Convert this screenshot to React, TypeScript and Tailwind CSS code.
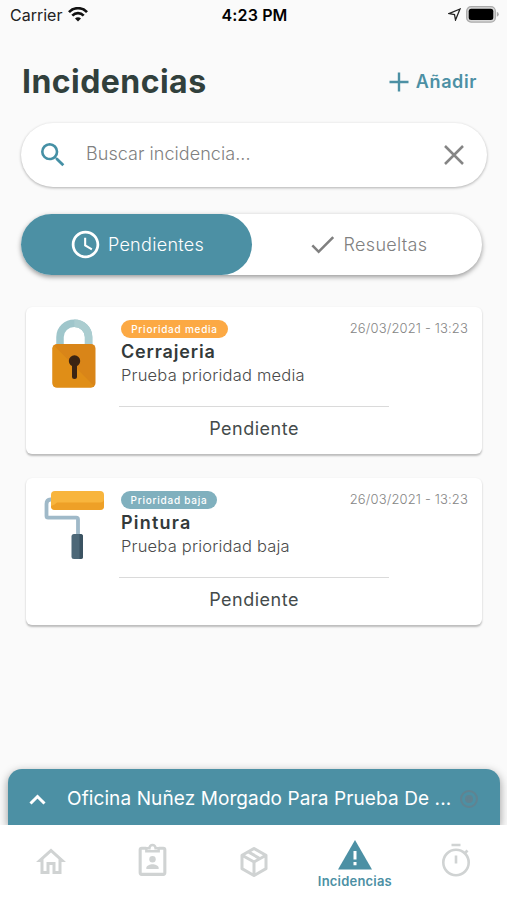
import { MdAccessTime, MdCheck, MdOutlineHome, MdSearch } from "react-icons/md";
import type { ReactNode } from "react";

function WifiIcon() {
    return (
        <svg width="20" height="15" viewBox="0 0 20 15" fill="none" stroke="#111" strokeWidth="2.7">
            <path d="M1 5.1C6-.1 14-.1 19 5.1" />
            <path d="M4.3 8.6c3.2-3.2 8.2-3.2 11.4 0" />
            <path d="M10 14.5l-3-3.1c1.7-1.5 4.3-1.5 6 0z" fill="#111" stroke="none" />
        </svg>
    )
}

function BatteryIcon() {
    return (
        <svg width="33" height="17" viewBox="0 0 33 17">
            <rect x=".7" y=".7" width="28.6" height="15.4" rx="4.4" fill="#d8d8d8" stroke="#aaa" strokeWidth="1.3" />
            <rect x="2.7" y="2.7" width="24.6" height="11.4" rx="2.5" fill="#000" />
            <path d="M30.8 5.8q2 .6 2 2.5t-2 2.5z" fill="#aaa" />
        </svg>
    )
}

function LockIcon() {
    return (
        <svg width="44" height="70" viewBox="0 0 44 70">
            <path d="M8 28V18a14.3 13.8 0 0 1 28.6 0V28" fill="none" stroke="#9fc6cb" strokeWidth="7.5" />
            <path d="M22.3 4.2A14.3 13.8 0 0 1 36.6 18V28" fill="none" stroke="#abcdd0" strokeWidth="7.5" />
            <rect x=".5" y="25" width="43" height="43.5" rx="4.5" fill="#d98518" />
            <path d="M2 26.5L42 67l-3 1.500H5Q.5 68.500.5 64V29.500Q.5 27.500 2 26.500z" fill="#e08e17" />
            <circle cx="22.5" cy="42" r="5.7" fill="#3b2413" />
            <path d="M22.5 42v15.500" stroke="#3b2413" strokeWidth="5" strokeLinecap="round" />
        </svg>
    )
}

function RollerIcon() {
    return (
        <svg width="62" height="70" viewBox="0 0 62 70">
            <path d="M9 9.5H7.500Q3.500 9.500 3.500 14V26q0 1.700 1.700 1.700h28q1.800 0 1.800 1.800V46" fill="none" stroke="#9fb9c8" strokeWidth="3.8" />
            <rect x="8" y="1" width="53" height="19" rx="4" fill="#f8b53d" />
            <path d="M8 16q4-1.500 6-3.500h43q4 0 4-4V16q0 4-4 4H12q-4 0-4-4z" fill="#eea027" />
            <rect x="28.5" y="44" width="11.5" height="25" rx="2.5" fill="#4d6878" />
            <path d="M36.500 44h1q2.500 0 2.500 2.500v20q0 2.500-2.500 2.500h-1z" fill="#3b5362" />
        </svg>
    )
}

function ClipboardIcon() {
    return (
        <svg width="37" height="37" viewBox="0 0 24 24" fill="none" stroke="currentColor" strokeWidth="2">
            <path d="M8 4H5a1 1 0 0 0-1 1v15a1 1 0 0 0 1 1h14a1 1 0 0 0 1-1V5a1 1 0 0 0-1-1h-3" />
            <path d="M8 4v2h8V4h-2a2 2 0 0 0-4 0z" strokeWidth="1.6" />
            <circle cx="12" cy="11.2" r="2.1" fill="currentColor" stroke="none" />
            <path d="M8 17.500v-.8c0-1.500 2.500-2.300 4-2.300s4 .8 4 2.300v.8z" fill="currentColor" stroke="none" />
        </svg>
    )
}

function PackageIcon() {
    return (
        <svg width="36" height="36" viewBox="0 0 24 24" fill="currentColor">
            <path d="M21 16.500c0 .38-.21.71-.53.88l-7.900 4.440a.99.99 0 0 1-1.140 0l-7.900-4.440A1 1 0 0 1 3 16.500v-9c0-.38.21-.71.53-.88l7.900-4.440a.99.99 0 0 1 1.140 0l7.900 4.440c.32.17.53.5.53.88v9M12 4.150l-1.890 1.070L16 8.610l1.960-1.110L12 4.150M6.040 7.500L12 10.850l1.960-1.100-5.880-3.400L6.040 7.500M5 15.910l6 3.380v-6.710L5 9.210v6.700m14 0v-6.700l-6 3.370v6.710l6-3.380z" />
        </svg>
    )
}

function WarningIcon() {
    return (
        <svg width="36" height="32" viewBox="0 0 36 32">
            <path d="M18 1L35 30.500H1z" fill="#4c90a4" />
            <path d="M18 12v8.500M18 23v3.300" stroke="#fff" strokeWidth="3" />
        </svg>
    )
}

function StopwatchIcon() {
    return (
        <svg width="34" height="36" viewBox="0 0 34 36" fill="none" stroke="currentColor" strokeWidth="2.6">
            <circle cx="17" cy="20.5" r="12.7" />
            <path d="M12.500 3h9M17 13.500v8" strokeWidth="2.6" />
            <path d="M26 11l2.500-2.500" />
        </svg>
    )
}

type Incident = {
    title: string
    titleClass: string
    priority: string
    badgeClass: string
    description: string
    icon: ReactNode
}

const INCIDENTS: Incident[] = [
    {
        title: "Cerrajeria",
        titleClass: "tracking-[0.85px]",
        priority: "Prioridad media",
        badgeClass: "w-[107px] bg-[#fca944]",
        description: "Prueba prioridad media",
        icon: <LockIcon />,
    },
    {
        title: "Pintura",
        titleClass: "tracking-[1.2px]",
        priority: "Prioridad baja",
        badgeClass: "w-24 bg-[#80b0be]",
        description: "Prueba prioridad baja",
        icon: <RollerIcon />,
    },
]

function IncidentCard({ title, titleClass, priority, badgeClass, description, icon }: Incident) {
    return (
        <article className="flex h-[147px] rounded-md bg-white pt-[13px] shadow-[0_1.5px_2px_rgba(0,0,0,0.25)]">
            <div className="-mt-px flex w-[95px] shrink-0 justify-center">{icon}</div>
            <div className="flex-1">
                <div className="flex h-[18px] items-center justify-between pr-3.5">
                    <span className={`flex h-[18px] items-center justify-center rounded-full text-[10px] font-medium tracking-[0.75px] text-white ${badgeClass}`}>
                        {priority}
                    </span>
                    <time className="text-[13px] font-light tracking-[0.15px] text-[#858585]">26/03/2021 - 13:23</time>
                </div>
                <h2 className={`mt-0.5 text-[18px] leading-6 font-semibold text-[#333a3a] ${titleClass}`}>{title}</h2>
                <p className="text-[16.5px] leading-[23px] font-light tracking-[0.2px] text-[#4a4a4a]">{description}</p>
                <div className="mt-[19px] -ml-0.5 w-[270px] border-t border-[#dadada] pt-2.5 text-center text-[18px] leading-6 tracking-[0.5px] text-[#444b4b]">
                    Pendiente
                </div>
            </div>
        </article>
    )
}

export default function App() {
    return (
        <div className="flex h-[900px] w-[507px] flex-col overflow-hidden bg-[#fafafa] font-['Inter',sans-serif]">
            <header className="grid h-[29px] shrink-0 grid-cols-3 items-center pr-2 pl-2.5 text-[16px] text-[#222]">
                <div className="flex items-center gap-1.5">
                    <span>Carrier</span>
                    <WifiIcon />
                </div>
                <span className="text-center font-semibold tracking-[0.15px] text-black">4:23 PM</span>
                <div className="flex items-center justify-end gap-[5px]">
                    <svg width="13" height="13" viewBox="0 0 13 13" fill="none" stroke="#222" strokeWidth="1.3">
                        <path d="M12 1L1 5.600l5.500.9L7.500 12z" />
                    </svg>
                    <BatteryIcon />
                </div>
            </header>

            <div className="flex h-[94px] shrink-0 items-center justify-between pt-[11px] pr-[30px] pl-[22px]">
                <h1 className="text-[32px] font-bold tracking-[0.45px] text-[#31403c]">Incidencias</h1>
                <button className="flex items-center gap-[3px] text-[18px] font-semibold tracking-[0.6px] text-[#4c90a4]">
                    <svg className="mr-1" width="20" height="20" viewBox="0 0 20 20" stroke="currentColor" strokeWidth="2.4">
                        <path d="M10 .500v19M.500 10h19" />
                    </svg>
                    Añadir
                </button>
            </div>

            <div className="mx-[21px] flex h-16 w-[466px] shrink-0 items-center rounded-full bg-white pr-[19px] pl-4 shadow-[0_1px_3px_rgba(0,0,0,0.3)]">
                <MdSearch className="size-8 text-[#4590a5]" />
                <span className="ml-[17px] flex-1 pb-1 text-[18px] font-light tracking-[0.05px] text-[#808080]">Buscar incidencia...</span>
                <svg width="28" height="28" viewBox="0 0 28 28" stroke="#858585" strokeWidth="2.5">
                    <path d="M5 5l18 18M23 5L5 23" />
                </svg>
            </div>

            <div className="mt-[27px] ml-[21px] flex h-[61px] w-[461px] shrink-0 rounded-full bg-white shadow-[0_2px_5px_rgba(0,0,0,0.4)]">
                <button className="flex w-[231px] items-center justify-center gap-1.5 rounded-full bg-[#4c90a4] text-[18px] font-light tracking-[0.3px] text-white">
                    <MdAccessTime className="size-[33px]" />
                    Pendientes
                </button>
                <button className="flex flex-1 items-center justify-center gap-1.5 text-[18px] font-light tracking-[0.3px] text-[#808080]">
                    <MdCheck className="size-[31px]" />
                    Resueltas
                </button>
            </div>

            <main className="mt-8 ml-[26px] flex w-[456px] flex-1 flex-col gap-6">
                {INCIDENTS.map((incident) => (
                    <IncidentCard key={incident.title} {...incident} />
                ))}
            </main>

            <div className="mx-2 flex h-14 w-[492px] shrink-0 items-center rounded-t-[14px] bg-[#4c90a4] pt-1 pl-[15px] text-white shadow-[0_3px_10px_rgba(0,0,0,0.4)]">
                <svg width="29" height="29" viewBox="0 0 29 29" fill="none" stroke="currentColor" strokeWidth="3">
                    <path d="M7.500 18.500l7-7 7 7" />
                </svg>
                <span className="ml-[15px] w-[390px] text-[19px] tracking-[0.1px] whitespace-nowrap">Oficina Nuñez Morgado Para Prueba De ...</span>
                <svg className="ml-0.5 opacity-50" width="20" height="20" viewBox="0 0 20 20" fill="none" stroke="#74777f" strokeWidth="2">
                    <circle cx="10" cy="10" r="8" />
                    <circle cx="10" cy="10" r="3" fill="#74777f" />
                </svg>
            </div>
            <nav className="relative grid h-[75px] shrink-0 grid-cols-5 bg-white text-[#d0d3d3]">
                <div className="flex justify-center pt-[19px] pl-px"><MdOutlineHome className="size-[36px]" /></div>
                <div className="flex justify-center pt-[17px] pl-px"><ClipboardIcon /></div>
                <div className="flex justify-center pt-[19px] pl-px"><PackageIcon /></div>
                <div className="flex flex-col items-center gap-0.5 pt-[14px] text-[#4c90a4]">
                    <WarningIcon />
                    <span className="text-[13px] leading-4 font-semibold tracking-[0.2px]">Incidencias</span>
                </div>
                <div className="flex justify-center pt-[17px]"><StopwatchIcon /></div>
            </nav>
        </div>
    )
}
